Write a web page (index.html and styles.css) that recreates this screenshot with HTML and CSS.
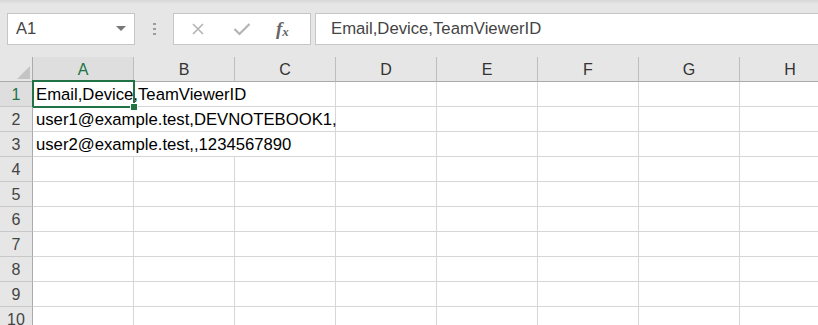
FILE: index.html
```html
<!DOCTYPE html>
<html>
  <head>
    <title>Book1 - Excel</title>
    <link rel="stylesheet" href="styles.css">
  </head>
  <body>
    <div class="toolbar">
      <div class="name-box">
        <span class="name">A1</span>
        <span class="caret"></span>
      </div>
      <div class="grip">
        <span></span><span></span><span></span>
      </div>
      <div class="fx-box">
        <svg class="icon" width="14" height="14" viewBox="0 0 14 14">
          <path d="M2 2 L12 12 M12 2 L2 12" stroke="#b4b4b4" stroke-width="1.6" fill="none" />
        </svg>
        <svg class="icon" width="18" height="14" viewBox="0 0 18 14">
          <path d="M1.5 7 L6.5 12 L16.5 2" stroke="#b4b4b4" stroke-width="2.2" fill="none" />
        </svg>
        <span class="fx">f<sub>x</sub></span>
      </div>
      <div class="formula">Email,Device,TeamViewerID</div>
    </div>

    <div class="sheet">
      <div class="row head">
        <div class="corner"><span class="tri"></span></div>
        <div class="col sel">A</div>
        <div class="col">B</div>
        <div class="col">C</div>
        <div class="col">D</div>
        <div class="col">E</div>
        <div class="col">F</div>
        <div class="col">G</div>
        <div class="col last">H</div>
      </div>

      <div class="row">
        <div class="rh sel">1</div>
        <div class="cell span3">Email,Device,TeamViewerID</div>
        <div class="cell"></div><div class="cell"></div><div class="cell"></div><div class="cell"></div><div class="cell last"></div>
        <div class="selection"><span class="handle"></span></div>
      </div>
      <div class="row">
        <div class="rh">2</div>
        <div class="cell span3">user1@example.test,DEVNOTEBOOK1,</div>
        <div class="cell"></div><div class="cell"></div><div class="cell"></div><div class="cell"></div><div class="cell last"></div>
      </div>
      <div class="row">
        <div class="rh">3</div>
        <div class="cell span3">user2@example.test,,1234567890</div>
        <div class="cell"></div><div class="cell"></div><div class="cell"></div><div class="cell"></div><div class="cell last"></div>
      </div>
      <div class="row">
        <div class="rh">4</div>
        <div class="cell"></div><div class="cell"></div><div class="cell"></div><div class="cell"></div><div class="cell"></div><div class="cell"></div><div class="cell"></div><div class="cell last"></div>
      </div>
      <div class="row">
        <div class="rh">5</div>
        <div class="cell"></div><div class="cell"></div><div class="cell"></div><div class="cell"></div><div class="cell"></div><div class="cell"></div><div class="cell"></div><div class="cell last"></div>
      </div>
      <div class="row">
        <div class="rh">6</div>
        <div class="cell"></div><div class="cell"></div><div class="cell"></div><div class="cell"></div><div class="cell"></div><div class="cell"></div><div class="cell"></div><div class="cell last"></div>
      </div>
      <div class="row">
        <div class="rh">7</div>
        <div class="cell"></div><div class="cell"></div><div class="cell"></div><div class="cell"></div><div class="cell"></div><div class="cell"></div><div class="cell"></div><div class="cell last"></div>
      </div>
      <div class="row">
        <div class="rh">8</div>
        <div class="cell"></div><div class="cell"></div><div class="cell"></div><div class="cell"></div><div class="cell"></div><div class="cell"></div><div class="cell"></div><div class="cell last"></div>
      </div>
      <div class="row">
        <div class="rh">9</div>
        <div class="cell"></div><div class="cell"></div><div class="cell"></div><div class="cell"></div><div class="cell"></div><div class="cell"></div><div class="cell"></div><div class="cell last"></div>
      </div>
      <div class="row">
        <div class="rh">10</div>
        <div class="cell"></div><div class="cell"></div><div class="cell"></div><div class="cell"></div><div class="cell"></div><div class="cell"></div><div class="cell"></div><div class="cell last"></div>
      </div>
    </div>
  </body>
</html>
```

FILE: styles.css
```css
body {
  margin: 0;
  width: 818px;
  height: 325px;
  overflow: hidden;
  background-color: white;
  font-family: "Liberation Sans", Arial, sans-serif;
}

.toolbar {
  display: flex;
  align-items: center;
  height: 57px;
  padding: 0 0 0 7px;
  box-sizing: border-box;
  background: linear-gradient(to bottom, #d6d6d6 0px, #e6e6e6 4px, #e6e6e6 100%);
}

.name-box {
  display: flex;
  align-items: center;
  justify-content: space-between;
  width: 128px;
  height: 32px;
  box-sizing: border-box;
  background-color: white;
  border: solid 1px #c6c6c6;
  padding: 0 8px 0 8px;
}

.name {
  font-size: 16.5px;
  color: #444;
}

.caret {
  width: 0;
  height: 0;
  border-left: 5px solid transparent;
  border-right: 5px solid transparent;
  border-top: 5px solid #777;
}

.grip {
  display: flex;
  flex-direction: column;
  gap: 3px;
  margin: 0 17px 0 18px;
}

.grip span {
  width: 3px;
  height: 2px;
  background-color: #9c9c9c;
}

.fx-box {
  display: flex;
  align-items: center;
  width: 138px;
  height: 32px;
  box-sizing: border-box;
  background-color: white;
  border: solid 1px #c6c6c6;
  padding-left: 17px;
  gap: 28px;
}

.fx {
  font-family: "Liberation Serif", serif;
  font-style: italic;
  font-weight: bold;
  font-size: 19px;
  color: #666;
  margin-left: -3px;
}

.fx sub {
  font-size: 13px;
  vertical-align: -1px;
}

.formula {
  flex: 1;
  height: 32px;
  margin-left: 4px;
  box-sizing: border-box;
  background-color: white;
  border: solid 1px #c6c6c6;
  border-right: none;
  padding-left: 15px;
  line-height: 30px;
  font-size: 16.7px;
  color: #444;
  white-space: nowrap;
}

.sheet {
  width: 818px;
}

.row {
  position: relative;
  display: flex;
  height: 25px;
}

.head .col {
  width: 101px;
  height: 25px;
  flex-shrink: 0;
  box-sizing: border-box;
  background-color: #e6e6e6;
  border-right: solid 1px #bdbdbd;
  border-bottom: solid 1px #ababab;
  text-align: center;
  line-height: 25px;
  font-size: 16px;
  color: #333;
}

.head .col.last {
  width: 78px;
  padding-left: 22px;
  border-right: none;
}

.head .col.sel {
  background-color: #dedede;
  color: #217346;
}

.corner {
  position: relative;
  width: 33px;
  height: 25px;
  flex-shrink: 0;
  box-sizing: border-box;
  background-color: #e6e6e6;
  border-right: solid 1px #ababab;
  border-bottom: solid 1px #ababab;
}

.tri {
  position: absolute;
  right: 2px;
  bottom: 2px;
  width: 0;
  height: 0;
  border-left: 13px solid transparent;
  border-bottom: 13px solid #c4c4c4;
}

.rh {
  width: 33px;
  height: 25px;
  flex-shrink: 0;
  box-sizing: border-box;
  background-color: #e6e6e6;
  border-right: solid 1px #ababab;
  border-bottom: solid 1px #c8c8c8;
  text-align: center;
  line-height: 25px;
  font-size: 16px;
  color: #444;
}

.rh.sel {
  background-color: #dedede;
  color: #217346;
}

.cell {
  width: 101px;
  height: 25px;
  flex-shrink: 0;
  box-sizing: border-box;
  border-right: solid 1px #d6d6d6;
  border-bottom: solid 1px #d6d6d6;
  padding-left: 3px;
  line-height: 25px;
  font-size: 16.7px;
  color: #000;
  white-space: nowrap;
}

.cell.span3 {
  width: 303px;
}

.cell.last {
  width: 78px;
  border-right: none;
}

.selection {
  position: absolute;
  left: 32px;
  top: -2px;
  width: 103px;
  height: 28px;
  box-sizing: border-box;
  border: solid 2px #217346;
}

.handle {
  position: absolute;
  right: -5px;
  bottom: -5px;
  width: 6px;
  height: 6px;
  background-color: #217346;
  border: solid 1px white;
}
```
